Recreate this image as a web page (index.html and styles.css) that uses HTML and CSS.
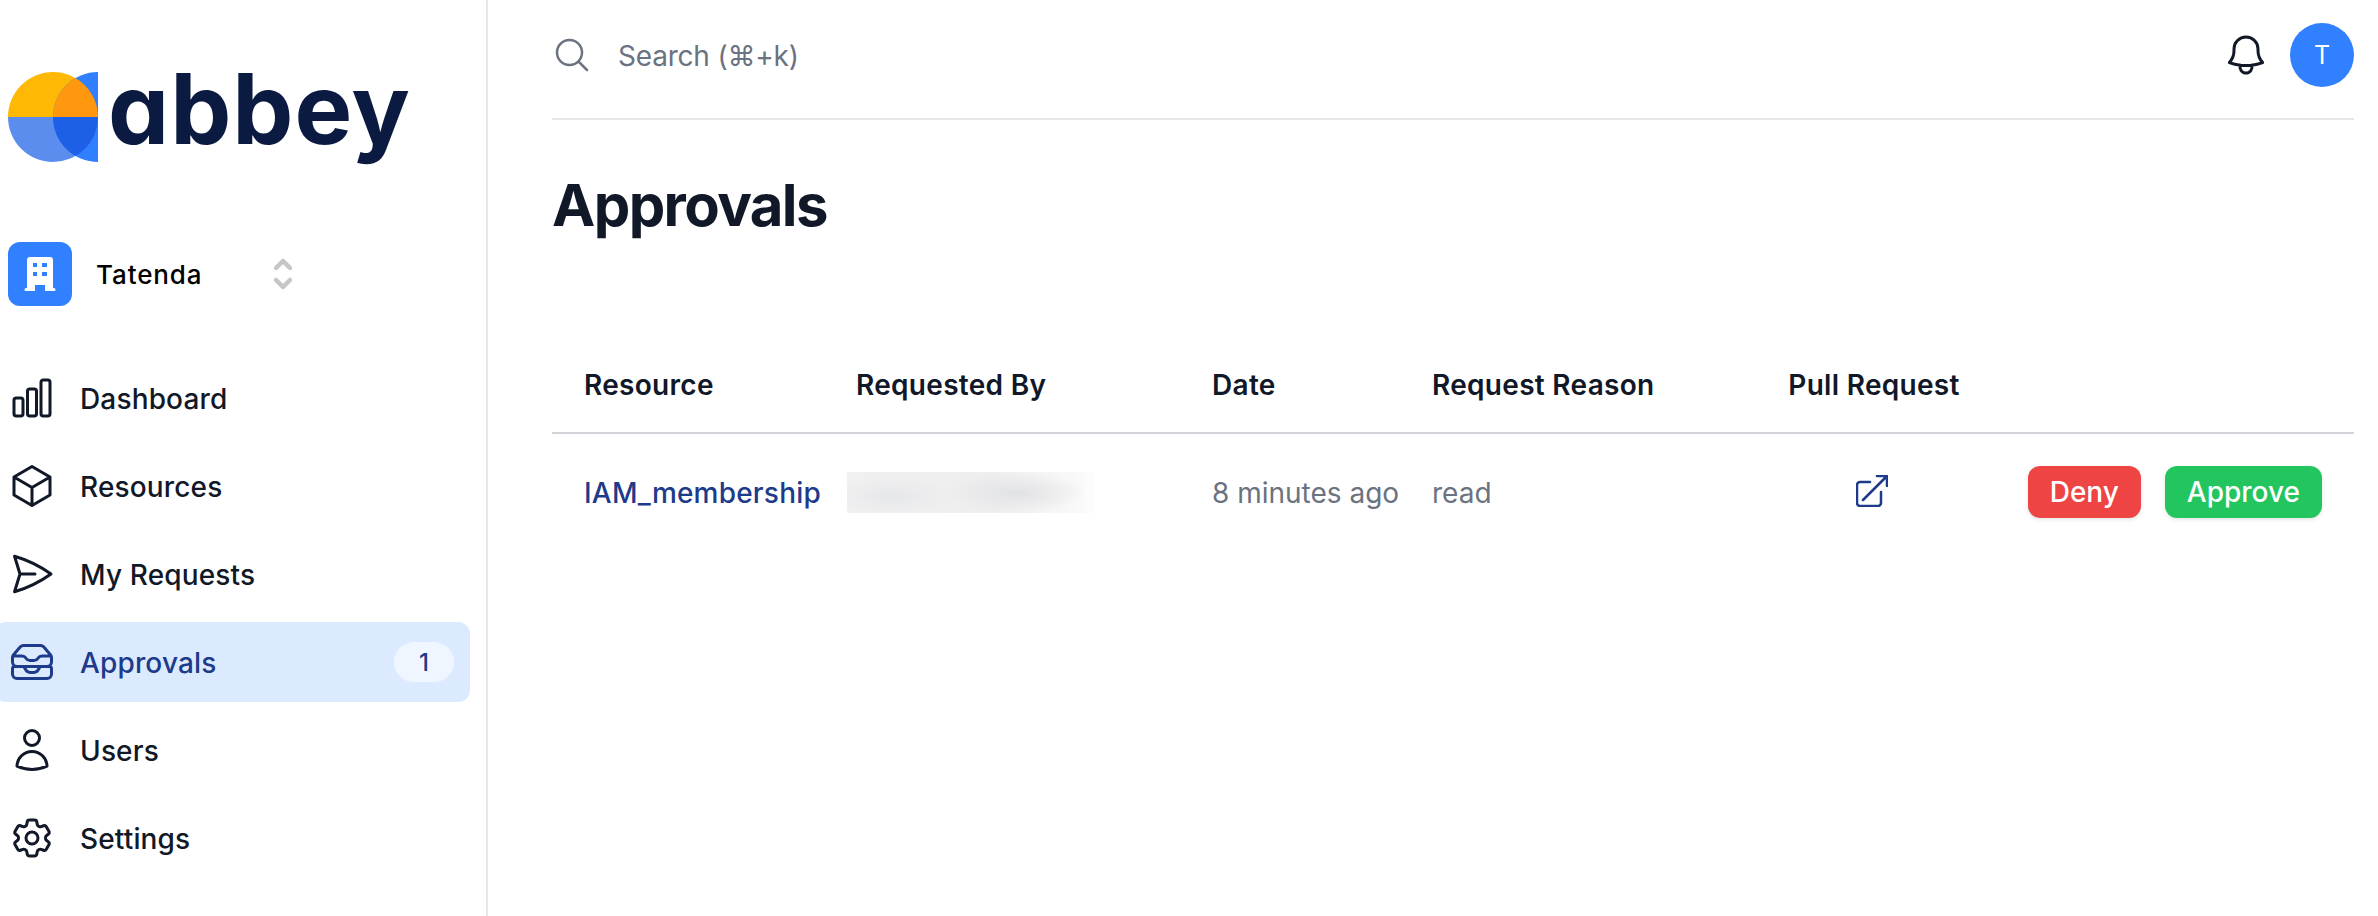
FILE: index.html
```html
<!DOCTYPE html>
<html lang="en">

<head>
    <meta charset="UTF-8">
    <title>Approvals - abbey</title>
    <link rel="stylesheet" href="styles.css">
</head>

<body>

    <aside class="sidebar">
        <div class="logo">
            <svg class="logo-mark" viewBox="0 0 90 90" width="90" height="90">
                <defs>
                    <clipPath id="lens">
                        <path d="M90 0A45 45 0 0 0 90 90Z" />
                    </clipPath>
                </defs>
                <path d="M0 45A45 45 0 0 1 90 45Z" fill="#ffb905" />
                <path d="M0 45A45 45 0 0 0 90 45Z" fill="#5b8def" />
                <path d="M90 0A45 45 0 0 0 90 90Z" fill="#2f7fff" />
                <g clip-path="url(#lens)">
                    <path d="M0 45A45 45 0 0 1 90 45Z" fill="#ff970f" />
                    <path d="M0 45A45 45 0 0 0 90 45Z" fill="#1d5fe6" />
                </g>
            </svg>
            <span class="logo-word">abbey</span>
        </div>

        <div class="org-switch">
            <div class="org-icon">
                <svg viewBox="0 0 64 64" width="64" height="64">
                    <path fill="#fff" d="M22 15h20a3 3 0 0 1 3 3v28h1a1.500 1.500 0 0 1 0 3h-9v-6h-10v6h-9a1.500 1.500 0 0 1 0-3h1V18a3 3 0 0 1 3-3z" />
                    <path fill="#3180ff" d="M25 21h4v4h-4zM34 21h5v4h-5zM25 30h4v4h-4zM34 30h5v4h-5z" />
                </svg>
            </div>
            <span class="org-name">Tatenda</span>
            <svg class="org-chevrons" viewBox="0 0 18 32" width="18" height="32">
                <path d="M2 10l7-7 7 7M2 22l7 7 7-7" />
            </svg>
        </div>

        <nav class="nav">
            <a class="nav-item" href="#">
                <svg class="icon" viewBox="0 0 24 24"><path d="M3 13.125C3 12.504 3.504 12 4.125 12h2.250c.621 0 1.125.504 1.125 1.125v6.750C7.500 20.496 6.996 21 6.375 21h-2.250A1.125 1.125 0 013 19.875v-6.750zM9.750 8.625c0-.621.504-1.125 1.125-1.125h2.250c.621 0 1.125.504 1.125 1.125v11.250c0 .621-.504 1.125-1.125 1.125h-2.250a1.125 1.125 0 01-1.125-1.125V8.625zM16.500 4.125c0-.621.504-1.125 1.125-1.125h2.250C20.496 3 21 3.504 21 4.125v15.750c0 .621-.504 1.125-1.125 1.125h-2.250a1.125 1.125 0 01-1.125-1.125V4.125z" /></svg>
                <span class="nav-label">Dashboard</span>
            </a>
            <a class="nav-item" href="#">
                <svg class="icon" viewBox="0 0 24 24"><path d="M21 7.500l-9-5.250L3 7.500m18 0l-9 5.250m9-5.250v9l-9 5.250M3 7.500l9 5.250M3 7.500v9l9 5.250m0-9v9" /></svg>
                <span class="nav-label">Resources</span>
            </a>
            <a class="nav-item" href="#">
                <svg class="icon" viewBox="0 0 24 24"><path d="M6 12L3.269 3.126A59.768 59.768 0 0121.485 12 59.770 59.770 0 013.270 20.876L5.999 12zm0 0h7.500" /></svg>
                <span class="nav-label">My Requests</span>
            </a>
            <a class="nav-item active" href="#">
                <svg class="icon" viewBox="0 0 24 24"><path d="M7.875 14.250l1.214 1.942a2.250 2.250 0 001.908 1.058h2.006c.776 0 1.497-.4 1.908-1.058l1.214-1.942M2.410 9h4.636a2.250 2.250 0 011.872 1.002l.164.246a2.250 2.250 0 001.872 1.002h2.092a2.250 2.250 0 001.872-1.002l.164-.246A2.250 2.250 0 0116.954 9h4.636M2.410 9a2.250 2.250 0 00-.16.832V12a2.250 2.250 0 002.250 2.250h15A2.250 2.250 0 0021.750 12V9.832c0-.287-.055-.57-.16-.832M2.410 9a2.250 2.250 0 01.382-.632l3.285-3.832a2.250 2.250 0 011.708-.786h8.430c.657 0 1.281.287 1.709.786l3.284 3.832c.163.19.291.404.382.632M4.500 20.250h15A2.250 2.250 0 0021.750 18v-2.625c0-.621-.504-1.125-1.125-1.125H3.375c-.621 0-1.125.504-1.125 1.125V18a2.250 2.250 0 002.250 2.250z" /></svg>
                <span class="nav-label">Approvals</span>
                <span class="nav-badge">1</span>
            </a>
            <a class="nav-item" href="#">
                <svg class="icon" viewBox="0 0 24 24"><path d="M15.750 6a3.750 3.750 0 11-7.500 0 3.750 3.750 0 017.500 0zM4.501 20.118a7.500 7.500 0 0114.998 0A17.933 17.933 0 0112 21.750c-2.676 0-5.216-.584-7.499-1.632z" /></svg>
                <span class="nav-label">Users</span>
            </a>
            <a class="nav-item" href="#">
                <svg class="icon" viewBox="0 0 24 24"><path d="M9.594 3.940c.09-.542.56-.94 1.110-.94h2.593c.55 0 1.020.398 1.110.94l.213 1.281c.063.374.313.686.645.87.074.04.147.083.22.127.324.196.72.257 1.075.124l1.217-.456a1.125 1.125 0 011.370.49l1.296 2.247a1.125 1.125 0 01-.26 1.431l-1.003.827c-.293.24-.438.613-.431.992a6.759 6.759 0 010 .255c-.007.378.138.75.43.99l1.005.828c.424.35.534.954.26 1.430l-1.298 2.247a1.125 1.125 0 01-1.369.491l-1.217-.456c-.355-.133-.75-.072-1.076.124a6.570 6.570 0 01-.22.128c-.331.183-.581.495-.644.869l-.213 1.280c-.09.543-.56.941-1.110.941h-2.594c-.55 0-1.020-.398-1.110-.94l-.213-1.281c-.062-.374-.312-.686-.644-.87a6.520 6.520 0 01-.22-.127c-.325-.196-.72-.257-1.076-.124l-1.217.456a1.125 1.125 0 01-1.369-.49l-1.297-2.247a1.125 1.125 0 01.26-1.431l1.004-.827c.292-.24.437-.613.43-.992a6.932 6.932 0 010-.255c.007-.378-.138-.75-.43-.99l-1.004-.828a1.125 1.125 0 01-.26-1.430l1.297-2.247a1.125 1.125 0 011.370-.491l1.216.456c.356.133.751.072 1.076-.124.072-.044.146-.087.22-.128.332-.183.582-.495.644-.869l.214-1.281zM15 12a3 3 0 11-6 0 3 3 0 016 0z" /></svg>
                <span class="nav-label">Settings</span>
            </a>
        </nav>
    </aside>

    <main class="main">
        <header class="topbar">
            <svg class="search-icon" viewBox="0 0 24 24"><path d="M21 21l-5.197-5.197m0 0A7.500 7.500 0 105.196 5.196a7.500 7.500 0 0010.607 10.607z" /></svg>
            <span class="search-text">Search (⌘+k)</span>
            <svg class="icon bell" viewBox="0 0 24 24"><path d="M14.857 17.082a23.848 23.848 0 005.454-1.310A8.967 8.967 0 0118 9.750v-.7V9A6 6 0 006 9v.75a8.967 8.967 0 01-2.312 6.022c1.733.64 3.560 1.085 5.455 1.310m5.714 0a24.255 24.255 0 01-5.714 0m5.714 0a3 3 0 11-5.714 0" /></svg>
            <div class="avatar">T</div>
        </header>

        <h1 class="page-title">Approvals</h1>

        <table class="approvals">
            <colgroup>
                <col class="col-resource">
                <col class="col-user">
                <col class="col-date">
                <col class="col-reason">
                <col class="col-pull">
                <col>
            </colgroup>
            <thead>
                <tr>
                    <th>Resource</th>
                    <th>Requested By</th>
                    <th>Date</th>
                    <th>Request Reason</th>
                    <th class="cell-center">Pull Request</th>
                    <th></th>
                </tr>
            </thead>
            <tbody>
                <tr>
                    <td class="cell-resource">IAM_membership</td>
                    <td><div class="blurred-name"></div></td>
                    <td>8 minutes ago</td>
                    <td>read</td>
                    <td class="cell-center">
                        <svg class="link-icon" viewBox="0 0 32 32" width="32" height="32">
                            <path d="M14 7H4a3 3 0 0 0-3 3v18a3 3 0 0 0 3 3h18a3 3 0 0 0 3-3V17M7 25L31 1M21 1h10v10" />
                        </svg>
                    </td>
                    <td class="cell-actions">
                        <div class="actions">
                            <button class="btn btn-deny">Deny</button>
                            <button class="btn btn-approve">Approve</button>
                        </div>
                    </td>
                </tr>
            </tbody>
        </table>
    </main>

</body>

</html>
```

FILE: styles.css
```css
* {
    box-sizing: border-box;
}

body {
    font-family: "Inter", "DejaVu Sans", sans-serif;
    font-size: 28px;
    background-color: white;
    color: #111827;
    margin: 0;
    padding: 0;
    display: flex;
    height: 100vh;
    overflow: hidden;
}

.icon {
    width: 48px;
    height: 48px;
    flex-shrink: 0;
    fill: none;
    stroke: currentColor;
    stroke-width: 1.5;
    stroke-linecap: round;
    stroke-linejoin: round;
}

/* Sidebar */
.sidebar {
    width: 488px;
    flex-shrink: 0;
    border-right: 2px solid #e5e7eb;
    padding: 72px 16px 0 0;
}

.logo {
    display: flex;
    align-items: flex-start;
    gap: 10px;
    padding-left: 8px;
    height: 90px;
}

.logo-mark {
    flex-shrink: 0;
}

.logo-word {
    font-size: 97px;
    font-weight: 650;
    line-height: 74px;
    color: #0b1a40;
    letter-spacing: 1px;
    font-feature-settings: "cv11";
}

.org-switch {
    display: flex;
    align-items: center;
    margin-top: 80px;
    padding-left: 8px;
}

.org-icon {
    width: 64px;
    height: 64px;
    border-radius: 12px;
    background-color: #3180ff;
    flex-shrink: 0;
}

.org-icon svg {
    display: block;
}

.org-name {
    margin-left: 24px;
    width: 178px;
    font-size: 26px;
    font-weight: 500;
    letter-spacing: 0.9px;
    color: black;
}

.org-chevrons {
    fill: none;
    stroke: #c6c6c8;
    stroke-width: 4.5;
    stroke-linecap: round;
    stroke-linejoin: round;
}

.nav {
    display: flex;
    flex-direction: column;
    gap: 8px;
    margin-top: 52px;
}

.nav-item {
    display: flex;
    align-items: center;
    gap: 24px;
    height: 80px;
    margin-left: -6px;
    padding: 0 16px 0 14px;
    border-radius: 12px;
    font-weight: 500;
    color: #111827;
    text-decoration: none;
}

.nav-label {
    padding-top: 2px;
    letter-spacing: 0.15px;
}

.nav-item.active {
    background-color: #dbeafe;
    color: #1e3a8a;
}

.nav-badge {
    margin-left: auto;
    width: 60px;
    height: 40px;
    border-radius: 20px;
    background-color: #eff6ff;
    display: flex;
    align-items: center;
    justify-content: center;
    font-size: 24px;
}

/* Main column */
.main {
    flex: 1;
    min-width: 0;
    padding: 0 24px 0 64px;
}

.topbar {
    display: flex;
    align-items: center;
    padding: 23px 0 31px;
    height: 120px;
    border-bottom: 2px solid #e5e7eb;
}

.search-icon {
    width: 40px;
    height: 40px;
    fill: none;
    stroke: #6b7280;
    stroke-width: 1.5;
    stroke-linecap: round;
    stroke-linejoin: round;
}

.search-text {
    margin-left: 26px;
    padding-top: 2px;
    letter-spacing: -0.2px;
    color: #6b7280;
}

.bell {
    margin-left: auto;
    margin-right: 20px;
}

.avatar {
    width: 64px;
    height: 64px;
    border-radius: 50%;
    background-color: #3180ff;
    color: white;
    font-size: 25px;
    display: flex;
    align-items: center;
    justify-content: center;
}

.page-title {
    margin: 49px 0 97px;
    font-size: 58px;
    line-height: 72px;
    font-weight: 700;
    letter-spacing: -1.6px;
    color: #111827;
}

/* Table */
.approvals {
    width: 100%;
    table-layout: fixed;
    border-collapse: collapse;
}

.col-resource {
    width: 272px;
}

.col-user {
    width: 356px;
}

.col-date {
    width: 220px;
}

.col-reason {
    width: 356px;
}

.col-pull {
    width: 236px;
}

.approvals th {
    height: 95px;
    padding: 0 0 0 32px;
    text-align: left;
    font-weight: 600;
    letter-spacing: 0.3px;
    color: #111827;
    white-space: nowrap;
}

.approvals thead tr {
    border-bottom: 2px solid #d1d5db;
}

.approvals td {
    height: 118px;
    padding: 0 0 0 32px;
    color: #6b7280;
    white-space: nowrap;
}

.approvals .cell-center {
    padding: 0;
    text-align: center;
}

.approvals .cell-resource {
    font-weight: 500;
    letter-spacing: 0.2px;
    color: #1e3a8a;
}

.blurred-name {
    width: 247px;
    height: 41px;
    margin-left: -9px;
    background:
        radial-gradient(ellipse 70px 20px at 170px 21px, #e1e2e4, transparent),
        radial-gradient(ellipse 60px 18px at 45px 24px, #e6e7e9, transparent),
        linear-gradient(90deg, #f0f0f1 0%, #eeeeef 60%, #f8f8f8 90%, #fdfdfd 100%);
}

.link-icon {
    display: inline-block;
    vertical-align: middle;
    margin: 0 4px 4px 0;
    fill: none;
    stroke: #1e3a8a;
    stroke-width: 2.5;
    stroke-linecap: round;
    stroke-linejoin: round;
}

.approvals .cell-actions {
    padding: 0 32px 2px 0;
}

.actions {
    display: flex;
    justify-content: flex-end;
    gap: 24px;
}

.btn {
    height: 52px;
    padding: 0 22px;
    border: none;
    border-radius: 12px;
    font-family: inherit;
    font-size: 28px;
    font-weight: 500;
    color: white;
    box-shadow: 0 2px 4px rgba(0, 0, 0, 0.1);
    cursor: pointer;
}

.btn-deny {
    background-color: #ef4444;
}

.btn-approve {
    background-color: #22c55e;
}
```
